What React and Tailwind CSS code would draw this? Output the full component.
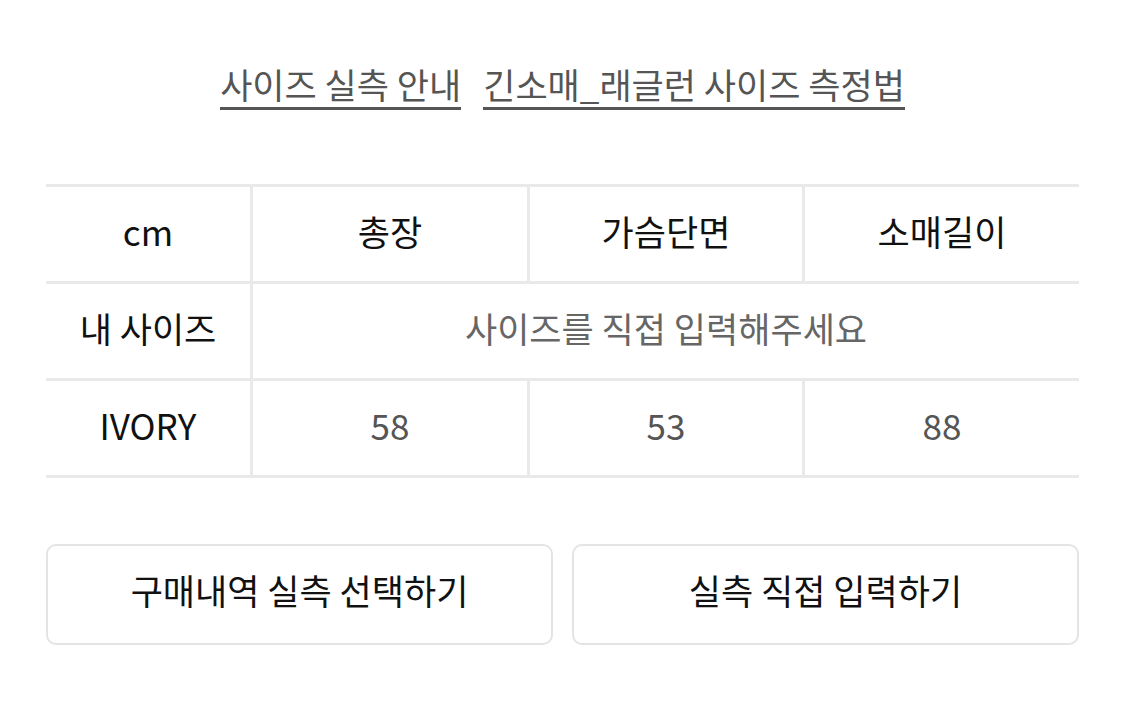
import React from "react";

const font = { fontFamily: '"Noto Sans CJK KR", "Noto Sans", sans-serif' };

function Cell({ children, className = "" }) {
    return (
        <div className={`flex items-center justify-center h-[97px] pb-[6px] border-b-[3px] border-[#e9e9e9] text-[35px] ${className}`}>
            {children}
        </div>
    );
}

export default function App() {
    const cols = ["총장", "가슴단면", "소매길이"];
    const values = ["58", "53", "88"];

    return (
        <div className="w-[1125px] h-[709px] bg-white" style={font}>
            {/* 상단 링크 */}
            <div className="flex justify-center gap-[22px] pt-[62px] text-[35px] text-[#555]">
                <span className="border-b-[3px] border-[#555] leading-[44px] pb-[1px]">사이즈 실측 안내</span>
                <span className="border-b-[3px] border-[#555] leading-[44px] pb-[1px]">긴소매_래글런 사이즈 측정법</span>
            </div>

            {/* 사이즈 표 */}
            <div className="mx-[46px] mt-[74px] border-t-[3px] border-[#e9e9e9] grid grid-cols-[207px_277px_275px_1fr] text-[#111]">
                <Cell className="border-r-[3px]">cm</Cell>
                {cols.map((c, i) => (
                    <Cell key={c} className={i < 2 ? "border-r-[3px]" : ""}>{c}</Cell>
                ))}

                <Cell className="border-r-[3px]">내 사이즈</Cell>
                <Cell className="col-span-3 text-[#666]">사이즈를 직접 입력해주세요</Cell>

                <Cell className="border-r-[3px]">IVORY</Cell>
                {values.map((v, i) => (
                    <Cell key={i} className={`text-[#555] ${i < 2 ? "border-r-[3px]" : ""}`}>{v}</Cell>
                ))}
            </div>

            {/* 버튼 */}
            <div className="mx-[46px] mt-[66px] flex gap-[19px]">
                <button className="flex-1 h-[101px] pb-[8px] rounded-[10px] border-2 border-[#e4e4e4] text-[35px] text-[#111]">
                    구매내역 실측 선택하기
                </button>
                <button className="flex-1 h-[101px] pb-[8px] rounded-[10px] border-2 border-[#e4e4e4] text-[35px] text-[#111]">
                    실측 직접 입력하기
                </button>
            </div>
        </div>
    );
}
